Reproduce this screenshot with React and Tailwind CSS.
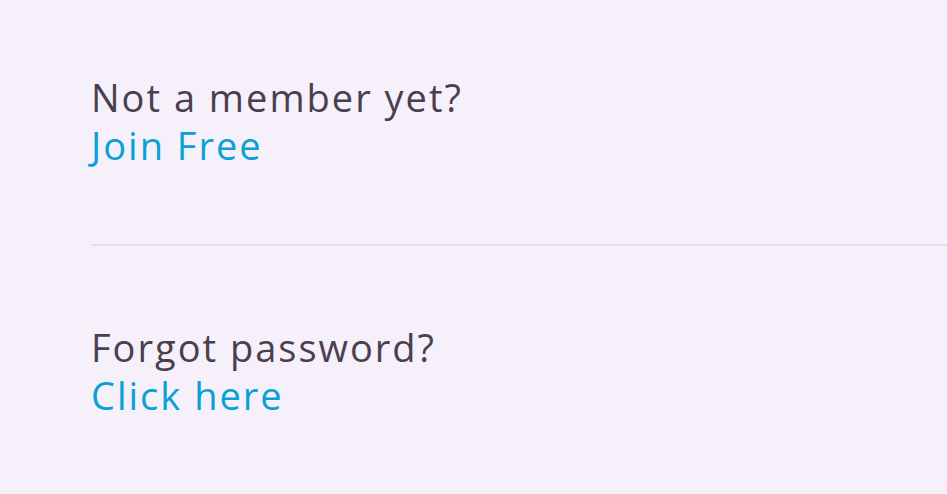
export default function App() {
  return (
    <div className="min-h-[494px] w-full bg-[#f6f0fb] pl-[91px] pt-[73px] font-['Open_Sans',sans-serif] text-[38px] leading-[48px] tracking-[2px]">
      <div>
        <p className="text-[#4a3f4f]">Not a member yet?</p>
        <a href="#" className="text-[#0aa0d8]">Join Free</a>
      </div>

      <hr className="mt-[75px] mb-[77px] border-0 h-[2px] bg-[#e2e0e6]" />

      <div>
        <p className="text-[#4a3f4f]">Forgot password?</p>
        <a href="#" className="text-[#0aa0d8]">Click here</a>
      </div>
    </div>
  );
}
